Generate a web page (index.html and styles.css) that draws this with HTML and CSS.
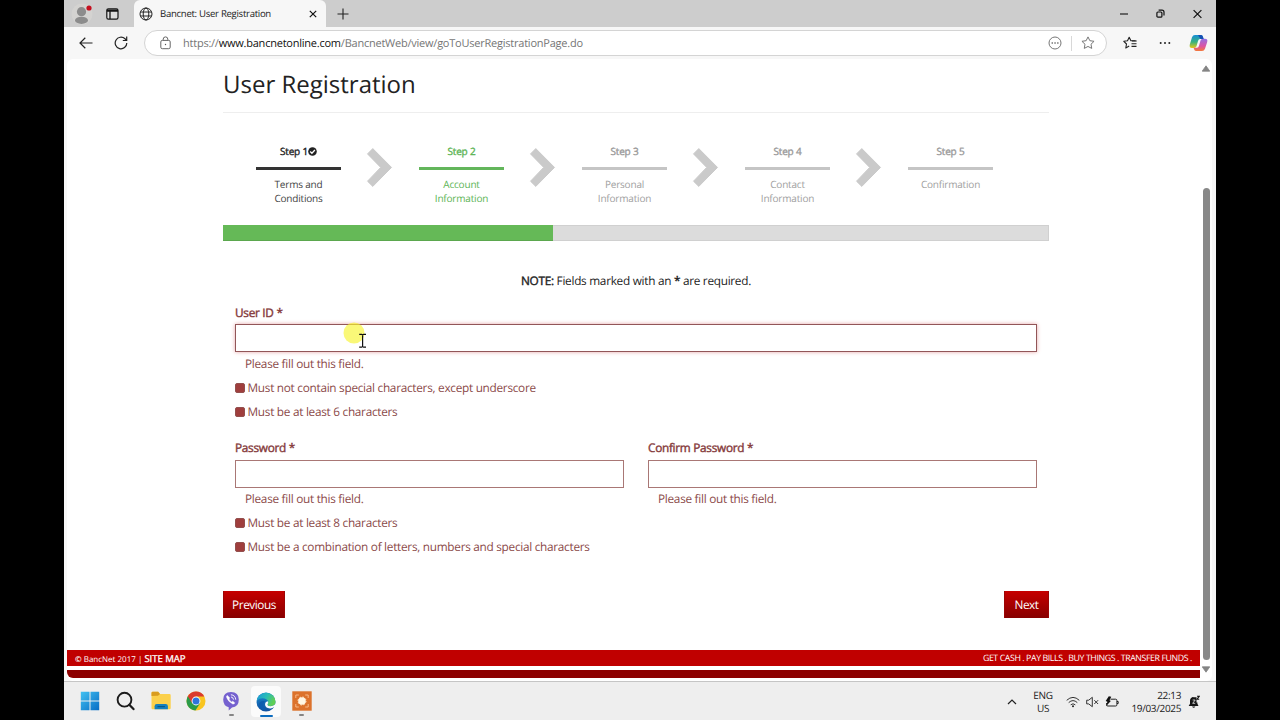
FILE: index.html
```html
<!DOCTYPE html>
<html lang="en">
<head>
<meta charset="utf-8">
<title>Bancnet: User Registration</title>
<link rel="stylesheet" href="styles.css">
</head>
<body>
<div class="screen">
  <header class="tabbar">
    <svg class="profile" width="24" height="24" viewBox="0 0 24 24"><circle cx="12" cy="12" r="10.5" fill="#d4d3d1"/><circle cx="11.5" cy="9.7" r="4.6" fill="#8c8c8c"/><ellipse cx="11.5" cy="18.3" rx="6.5" ry="3.6" fill="#8c8c8c"/><circle cx="19" cy="6" r="2.6" fill="#c50f1f"/></svg>
    <svg class="workspaces" width="13" height="12" viewBox="0 0 13 12"><rect x=".8" y=".8" width="11.2" height="10.4" rx="1.6" fill="#ddd" stroke="#151515" stroke-width="1.2"/><path d="M.8 2.2h11.2M1 3.2h11M4 3v8" stroke="#151515" stroke-width="1.3"/></svg>
    <div class="tab">
      <svg width="14" height="14" viewBox="0 0 14 14" fill="none" stroke="#222" stroke-width="1"><circle cx="7" cy="7" r="6"/><ellipse cx="7" cy="7" rx="2.8" ry="6"/><path d="M1.5 5h11M1.5 9h11"/></svg>
      <span class="tab-title">Bancnet: User Registration</span>
      <svg class="tab-close" width="8" height="8" viewBox="0 0 8 8" stroke="#111" stroke-width="1.2"><path d="M.8.8l6.4 6.4M7.2.8L.8 7.2"/></svg>
    </div>
    <svg class="newtab" width="12" height="12" viewBox="0 0 12 12" stroke="#222" stroke-width="1.1"><path d="M6 .5v11M.5 6h11"/></svg>
    <div class="winctl">
      <svg width="8" height="10" viewBox="0 0 8 10" stroke="#111" stroke-width="1.1"><path d="M0 5h8"/></svg>
      <svg width="9" height="10" viewBox="0 0 9 10" fill="none" stroke="#111" stroke-width="1.2"><rect x=".9" y="3" width="5" height="5.2" rx="1"/><path d="M2.6 1.2h3.4a2 2 0 0 1 2 2v3.2"/></svg>
      <svg width="9" height="10" viewBox="0 0 9 10" stroke="#111" stroke-width="1.2"><path d="M.6 1.1l7.8 7.8M8.4 1.1L.6 8.9"/></svg>
    </div>
  </header>
  <nav class="toolbar">
    <svg class="back" width="14" height="12" viewBox="0 0 14 12" fill="none" stroke="#222" stroke-width="1.2"><path d="M13.5 6H1M6.3.8L1 6l5.3 5.2"/></svg>
    <svg class="reload" width="14" height="14" viewBox="0 0 14 14" fill="none" stroke="#222" stroke-width="1.2"><path d="M12.8 7A5.8 5.8 0 1 1 11 2.8l1.5 1.5M12.7.6v3.9H8.8"/></svg>
    <div class="address">
      <svg width="11" height="14" viewBox="0 0 11 14" fill="none" stroke="#666" stroke-width="1"><rect x=".8" y="4.4" width="9.4" height="8.3" rx="1.5"/><path d="M3.2 4.4V3.2a2.3 2.3 0 0 1 4.6 0v1.2"/><circle cx="5.5" cy="8.5" r=".7" fill="#555" stroke="none"/></svg>
      <span class="url">https://<b>www.bancnetonline.com</b>/BancnetWeb/view/goToUserRegistrationPage.do</span>
      <svg class="more" width="14" height="14" viewBox="0 0 14 14"><circle cx="7" cy="7" r="6" fill="none" stroke="#777"/><path d="M3.6 7h1.3M6.4 7h1.3M9.2 7h1.3" stroke="#666" stroke-width="1.3"/></svg>
      <i class="sep"></i>
      <svg class="star" width="14" height="14" viewBox="0 0 14 14"><path d="M7 .9l1.850 3.800 4.200.6-3.050 2.950.72 4.150L7 10.450 3.280 12.400 4 8.250.95 5.300l4.200-.6z" fill="none" stroke="#777" stroke-linejoin="round"/></svg>
    </div>
    <svg class="favs" width="14" height="14" viewBox="0 0 14 14" fill="none" stroke="#222" stroke-width="1.1" stroke-linejoin="round"><path d="M12.6 4.8H7.9L6.2 1.2 4.5 4.8.8 5.300l2.700 2.700-.7 4 3.400-1.900"/><path d="M9 5h4.700M8.500 7.700h5M8.500 10.400h5"/></svg>
    <svg class="dots" width="12" height="4" viewBox="0 0 12 4" fill="#222"><circle cx="1.7" cy="2" r="1"/><circle cx="6" cy="2" r="1"/><circle cx="10.3" cy="2" r="1"/></svg>
    <svg class="copilot" width="19" height="18" viewBox="0 0 19 18">
      <defs><linearGradient id="ca" x1="0" y1="0" x2="0" y2="1"><stop offset="0" stop-color="#168ed8"/><stop offset=".55" stop-color="#3bb27c"/><stop offset="1" stop-color="#e9c716"/></linearGradient><linearGradient id="cb" x1="0" y1="0" x2="0" y2="1"><stop offset="0" stop-color="#9470e4"/><stop offset=".6" stop-color="#dd53a4"/><stop offset="1" stop-color="#f4793a"/></linearGradient></defs>
      <path d="M6 1h6q1.500 0 2 2l.6 2H11q-1.500 0-2 2l-1.500 5.200q-.6 1.800-2.500 1.800H3Q0 14 .8 10.500L3 3.200Q3.800 1 6 1z" fill="url(#ca)"/>
      <path d="M13 17H7q-1.500 0-2-2l-.4-1.200H8q1.500 0 2-2L11.500 6.600Q12 4.800 14 4.800h2Q19 4.800 18.200 8L16 14.800Q15.200 17 13 17z" fill="url(#cb)"/>
      <path d="M9 1h3q1.500 0 2 2l.6 1.900H11.500z" fill="#174fb4"/>
    </svg>
  </nav>
  <div class="viewport">
    <div class="page">
      <main class="content">
        <h1>User Registration</h1>
        <ol class="steps">
          <li class="step done"><b>Step 1<svg width="9" height="9" viewBox="0 0 9 9"><circle cx="4.5" cy="4.5" r="4.3" fill="#222"/><path d="M2.200 4.500l1.700 1.700 3-3.200" fill="none" stroke="#fff" stroke-width="1.3"/></svg></b><span>Terms and<br>Conditions</span></li>
          <li class="arrow"><svg width="27" height="41" viewBox="0 0 27 41"><path d="M1.500 6.900L6.800 1.600 25.500 20.400 6.800 39.400 1.500 34.200 14.700 20.400z" fill="#cacaca" stroke="#cacaca" stroke-linejoin="round"/></svg></li>
          <li class="step current"><b>Step 2</b><span>Account<br>Information</span></li>
          <li class="arrow"><svg width="27" height="41" viewBox="0 0 27 41"><path d="M1.500 6.900L6.800 1.600 25.500 20.400 6.800 39.400 1.500 34.200 14.700 20.400z" fill="#cacaca" stroke="#cacaca" stroke-linejoin="round"/></svg></li>
          <li class="step"><b>Step 3</b><span>Personal<br>Information</span></li>
          <li class="arrow"><svg width="27" height="41" viewBox="0 0 27 41"><path d="M1.500 6.900L6.800 1.600 25.500 20.400 6.800 39.400 1.500 34.200 14.700 20.400z" fill="#cacaca" stroke="#cacaca" stroke-linejoin="round"/></svg></li>
          <li class="step"><b>Step 4</b><span>Contact<br>Information</span></li>
          <li class="arrow"><svg width="27" height="41" viewBox="0 0 27 41"><path d="M1.500 6.900L6.800 1.600 25.500 20.400 6.800 39.400 1.500 34.200 14.700 20.400z" fill="#cacaca" stroke="#cacaca" stroke-linejoin="round"/></svg></li>
          <li class="step"><b>Step 5</b><span>Confirmation</span></li>
        </ol>
        <div class="progress"><div class="bar" style="width:40%"></div></div>
        <p class="note"><b>NOTE:</b> Fields marked with an <b>*</b> are required.</p>
        <form class="form">
          <div class="field user">
            <label>User ID *</label>
            <div class="input focused"><div class="pointer"><svg width="24" height="26" viewBox="0 0 24 26"><circle cx="11" cy="11" r="10.5" fill="#f7f430" fill-opacity=".65"/><path d="M16.200 12.300h2.400l1 .7 1-.7h2.400M19.600 13v11.500M16.200 25.200h2.400l1-.7 1 .7h2.400" fill="none" stroke="#111" stroke-width="1.2"/></svg></div></div>
            <p class="help">Please fill out this field.</p>
            <p class="rule">Must not contain special characters, except underscore</p>
            <p class="rule">Must be at least 6 characters</p>
          </div>
          <div class="pair">
            <div class="field">
              <label>Password *</label>
              <div class="input"></div>
              <p class="help">Please fill out this field.</p>
              <p class="rule">Must be at least 8 characters</p>
              <p class="rule">Must be a combination of letters, numbers and special characters</p>
            </div>
            <div class="field">
              <label>Confirm Password *</label>
              <div class="input"></div>
              <p class="help">Please fill out this field.</p>
            </div>
          </div>
        </form>
        <div class="actions"><span class="btn prev">Previous</span><span class="btn next">Next</span></div>
      </main>
      <footer class="footer"><span class="copy"><i>©</i> BancNet 2017 | <b>SITE MAP</b></span><span class="slogan">GET CASH . PAY BILLS . BUY THINGS . TRANSFER FUNDS .</span></footer>
      <div class="footer-base"></div>
    </div>
    <div class="scrollbar">
      <svg width="8" height="7" viewBox="0 0 8 7"><path d="M4 .8L7.800 6.200H.2z" fill="#858585" stroke="#858585" stroke-width=".8" stroke-linejoin="round"/></svg>
      <div class="thumb"></div>
      <svg width="8" height="7" viewBox="0 0 8 7"><path d="M4 6.200L7.800.8H.2z" fill="#858585" stroke="#858585" stroke-width=".8" stroke-linejoin="round"/></svg>
    </div>
  </div>
  <div class="taskbar">
    <div class="apps">
      <div class="app"><svg width="20" height="20" viewBox="0 0 20 20"><defs><linearGradient id="wn" gradientUnits="userSpaceOnUse" x1="0" y1="0" x2="20" y2="20"><stop offset="0" stop-color="#43c5f3"/><stop offset="1" stop-color="#0669c3"/></linearGradient></defs><path d="M.8.8h8.700v8.700H.8zM10.500.8h8.700v8.700h-8.700zM.8 10.500h8.700v8.700H.8zM10.500 10.500h8.700v8.700h-8.700z" fill="url(#wn)"/></svg></div>
      <div class="app"><svg width="20" height="20" viewBox="0 0 20 20" fill="none" stroke="#1b1b1b"><circle cx="9.5" cy="8.7" r="6.9" stroke-width="1.9"/><path d="M14.300 13.700l4.200 4.400" stroke-width="2.2" stroke-linecap="round"/></svg></div>
      <div class="app folder"><svg width="20" height="20" viewBox="0 0 20 20"><path d="M.5 2q0-1.200 1.200-1.200h5.500L9 3h9.500q1.200 0 1.200 1.200V17q0 1.200-1.200 1.200h-17Q.5 18.200.5 17z" fill="#fbd04b"/><path d="M.5 5V2Q.5.800 1.700.800h5.500L9 2.900 7 4.800z" fill="#d99c1f"/><path d="M3.600 18.200v-3q0-2.200 2.200-2.200h8.900q2.200 0 2.200 2.200v3z" fill="#157fbd"/><path d="M6.500 15.600h7.400" stroke="#075985" stroke-width="1.2"/></svg></div>
      <div class="app"><svg width="20" height="20" viewBox="0 0 20 20"><circle cx="10" cy="10" r="9.5" fill="#f9c51f"/><path d="M10 10L1.800 5.200A9.500 9.500 0 0 0 9.400 19.500l4.700-7.200z" fill="#2a9b49"/><path d="M1.800 5.300A9.500 9.500 0 0 1 18.300 5.500H10L6 12z" fill="#da3a2f"/><circle cx="10" cy="10" r="4.4" fill="#fff"/><circle cx="10" cy="10" r="3.5" fill="#2e74dc"/></svg></div>
      <div class="app running"><svg width="18" height="20" viewBox="0 0 18 20"><path d="M9 1Q16.800 1 16.800 8.600T10 16.400l-3.300 3v-3.200Q1.200 15 1.200 8.600 1.200 1 9 1z" fill="#7561cf"/><path d="M5.300 4.400Q4 5 4.700 6.600q1.500 4.200 6 6.300 1.400.4 2.100-1l-2-1.700-1.200.8q-1.900-1-2.700-3l.9-1z" fill="#fff" stroke="#fff" stroke-width=".5" stroke-linejoin="round"/><path d="M9.300 3.800q4.100.4 4.400 4.500M9.400 6q1.900.3 2.100 2.200" fill="none" stroke="#fff" stroke-width=".9" stroke-linecap="round"/></svg></div>
      <div class="app active"><svg width="20" height="20" viewBox="0 0 20 20"><defs><linearGradient id="ea" x1="0" y1="0" x2="1" y2=".4"><stop offset="0" stop-color="#1b94da"/><stop offset=".55" stop-color="#29bdb6"/><stop offset="1" stop-color="#60cf55"/></linearGradient><linearGradient id="eb" x1="0" y1="0" x2="0" y2="1"><stop offset="0" stop-color="#178ad1"/><stop offset="1" stop-color="#11509f"/></linearGradient></defs><circle cx="10" cy="10" r="9.5" fill="url(#eb)"/><path d="M.6 9A9.500 9.500 0 0 1 19.500 9.500Q19.600 14 14.700 14q-3.700 0-3.200-1.800 1-1 .7-2.600C11.500 6.700 5 4.200.6 9z" fill="url(#ea)"/><path d="M9 9q-4.500 5 1.500 9.500-7.400-.6-7.700-6Q3 8.500 9 9z" fill="#0d5cae"/><path d="M12 9.200q.7 1.800-.5 3-.3 1.900 3 2 2.600 0 4.800-1.900L20 15l-1.800.1q-2 1.600-4.200 1.400Q9 16 9 12q.3-2.600 3-2.800z" fill="#f9fbfd"/></svg></div>
      <div class="app running"><svg width="20" height="20" viewBox="0 0 20 20"><rect x=".3" y=".3" width="19.400" height="19.400" fill="#dc722c"/><path d="M3.800 7V4h3M13.200 4h3v3M16.200 13v3h-3M6.800 16h-3v-3" fill="none" stroke="#ffc99c" stroke-width=".8"/><circle cx="10" cy="10" r="3.800" fill="#fff6e4"/><circle cx="10" cy="10" r="4" fill="none" stroke="#fff0d8" stroke-width="1" stroke-dasharray="1.570 1.570"/></svg></div>
    </div>
    <div class="tray">
      <svg class="up" width="10" height="6" viewBox="0 0 10 6" fill="none" stroke="#222" stroke-width="1.2"><path d="M1 5l4-4 4 4"/></svg>
      <div class="lang">ENG<br>US</div>
      <svg class="wifi" width="14" height="12" viewBox="0 0 14 12" fill="none" stroke="#333"><path d="M.7 4.300q6.300-5.800 12.600 0M2.700 6.600q4.300-4 8.600 0M4.700 8.800q2.300-2 4.600 0"/><circle cx="7" cy="10.300" r="1" fill="#222" stroke="none"/></svg>
      <svg class="mute" width="13" height="12" viewBox="0 0 13 12" fill="none" stroke="#333"><path d="M.7 4.200h2L6.300 1.300v9.400L2.700 7.900h-2zM8.300 4.200l3.800 3.800M12.100 4.200L8.300 8" stroke-linejoin="round"/></svg>
      <svg class="battery" width="14" height="12" viewBox="0 0 14 12"><path d="M5.500 3.200h5.200q1.200 0 1.200 1.200v4.400q0 1.200-1.200 1.200H2.800q-1.200 0-1.200-1.200V7M12 5.500h1.200v2H12" fill="none" stroke="#222"/><path d="M3.800.3L.7 5l1.700.7L1 10.200 5.800 5 4.500 4.300 6.300.7z" fill="#111"/></svg>
      <div class="clock">22:13<br>19/03/2025</div>
      <svg class="bell" width="12" height="14" viewBox="0 0 12 14"><path d="M5.300 2Q2 2.600 2 6v2.800L.7 11h9.800L9.400 8.800V7.500H6zM4 11.500h3.400q-1.700 2.500-3.400 0z" fill="#151515"/><path d="M2.500 5.500q.3-3 3-3.300h3v6.300h-6z" fill="#151515"/><path d="M4.700 5h2.500L4.700 8.300h2.500" fill="none" stroke="#eee" stroke-width=".8"/><path d="M9 1.300h2.200L9 4.200h2.200" fill="none" stroke="#151515" stroke-width="1.1"/></svg>
    </div>
  </div>
</div>
</body>
</html>
```
FILE: styles.css
```css
*, ::before, ::after { box-sizing: border-box; }
body { margin: 0; background: #000; font-family: "Open Sans", "Noto Sans", sans-serif; text-rendering: geometricPrecision; }
svg { display: block; flex: none; }
h1, p, ol { margin: 0; padding: 0; }
.screen { width: 1152px; height: 720px; margin: 0 auto; background: #f7f7f7; display: flex; flex-direction: column; overflow: hidden; white-space: nowrap; }

.tabbar { height: 27px; background: #cdcdcd; display: flex; align-items: center; padding-left: 6px; flex: none; }
.workspaces { margin-left: 12px; }
.tab { width: 192px; height: 27px; margin-left: 15px; padding: 0 9px 0 5px; background: #f7f7f7; border-radius: 6px 6px 0 0; display: flex; align-items: center; }
.tab-title { font-size: 9.6px; line-height: 14px; letter-spacing: -.3px; color: #1c1c1c; margin-left: 7px; }
.tab-close { margin-left: auto; }
.newtab { margin-left: 11px; }
.winctl { margin-left: auto; display: flex; gap: 28px; padding-right: 14px; }

.toolbar { height: 32px; flex: none; display: flex; align-items: center; padding-left: 15px; }
.reload { margin-left: 21px; }
.address { width: 963px; height: 26px; margin-left: 16px; padding: 0 11px 0 15px; background: #fff; border: 1px solid #d4d4d4; border-radius: 13px; display: flex; align-items: center; }
.url { font-size: 11px; line-height: 16px; letter-spacing: -.23px; color: #767676; margin-left: 12px; padding-top: 2px; }
.url b { font-weight: 400; color: #111; }
.more { margin-left: auto; }
.sep { width: 1px; height: 15px; background: #d8d8d8; margin: 0 9px; }
.favs { margin-left: 16px; }
.dots { margin-left: 22px; }
.copilot { margin-left: 18px; }

.viewport { height: 622px; flex: none; margin: 0 4px 0 3px; background: #fff; border-radius: 6px; display: flex; overflow: hidden; }
.page { width: 1133px; flex: none; }
.content { width: 826px; height: 591px; margin-left: 156px; color: #222; font-size: 11.8px; letter-spacing: -.28px; }
h1 { height: 54px; border-bottom: 1px solid #eee; font-size: 24px; line-height: 52px; font-weight: 400; letter-spacing: 0; color: #222; }
.steps { list-style: none; display: flex; height: 112px; padding: 31px 0 0 33px; }
.step { width: 85px; text-align: center; color: #a0a0a0; font-size: 10px; line-height: 13.5px; letter-spacing: -.19px; }
.step b { display: flex; justify-content: center; align-items: center; height: 26px; padding-bottom: 8px; border-bottom: 3px solid #c5c5c5; font-weight: 400; -webkit-text-stroke: .35px; color: #999; }
.step span { display: block; padding-top: 8px; }
.done { color: #444; }
.done b { color: #222; border-color: #333; }
.current, .current b { color: #5cb454; }
.current b { border-color: #63b65b; }
.arrow { width: 78px; padding: 3px 0 0 25px; }
.progress { height: 16px; background: #dcdcdc; border: 1px solid #d0d0d0; border-width: 1px 1px 1px 0; }
.bar { height: 16px; margin-top: -1px; background: #65b957; border-bottom: 1px solid #5ba74e; }
.note { text-align: center; margin-top: 32px; line-height: 17px; height: 16px; color: #222; }
.note b { font-weight: 400; -webkit-text-stroke: .4px; }
.form { padding: 16px 12px 0; color: #8b4a49; }
.field label { display: block; height: 19px; line-height: 17px; -webkit-text-stroke: .4px; color: #853a3b; }
.input { height: 28px; border: 1px solid #a97775; background: #fff; position: relative; }
.focused { border-color: #925658; box-shadow: 0 0 4px #e6a5a6; }
.pointer { position: absolute; left: 107px; top: -3px; }
.help { line-height: 17px; height: 16px; margin: 4px 0 8px 10px; }
.rule { display: flex; align-items: center; height: 16px; line-height: 16px; margin-bottom: 8px; }
.rule::before { content: ""; flex: none; width: 10px; height: 10px; margin-right: 2.5px; border-radius: 2px; background: #9f3e3d; border: 1px solid #93504e; }
.user { height: 135px; }
.pair { display: grid; grid-template-columns: 389px 389px; gap: 24px; }
.pair .input { margin-top: 1px; }
.pair .help { margin-top: 3px; }
.pair .field { height: 151px; }
.actions { display: flex; justify-content: space-between; }
.btn { height: 27px; line-height: 28px; text-align: center; color: #fff; background: linear-gradient(#c60000, #870000); border: 1px solid #9b0505; border-width: 0 1px; letter-spacing: -.45px; }
.prev { width: 62px; }
.next { width: 45px; }
.footer { height: 16px; background: #c00000; color: #fff; display: flex; justify-content: space-between; font-size: 8px; line-height: 17px; letter-spacing: 0; padding: 0 8px; }
.footer b { font-weight: 400; -webkit-text-stroke: .3px; font-size: 9.6px; letter-spacing: -.05px; }
.footer i { font-style: normal; font-weight: 700; }
.slogan { font-size: 8.8px; line-height: 16px; letter-spacing: -.41px; }
.footer-base { height: 8px; margin-top: 4px; background: #8d0000; border-radius: 0 0 0 6px; }
.scrollbar { flex: 1; display: flex; flex-direction: column; align-items: center; padding: 6px 0 8px; }
.thumb { width: 7px; height: 472px; margin: auto 0 6px; border-radius: 4px; background: #888; }

.taskbar { flex: 1; background: #eee; border-top: 1px solid #c5c5c5; display: flex; justify-content: space-between; }
.apps { display: flex; padding: 1px 0 0 8px; gap: 5.4px; }
.app { width: 30px; height: 38px; padding: 0 0 2px 5px; position: relative; display: flex; align-items: center; justify-content: center; }
.folder { padding-left: 7px; }
.active { background: #fbfbfb; height: 31px; margin: 3px -2.5px 0 2.5px; border-radius: 4px; padding: 0; }
.running::after, .active::after { content: ""; position: absolute; left: 15px; bottom: 5px; width: 5px; height: 2px; border-radius: 1px; background: #858585; }
.active::after { left: 9px; bottom: 0; width: 13px; background: #0b6bbf; }
.tray { display: flex; align-items: center; padding-right: 16px; color: #222; font-size: 10px; line-height: 12.5px; letter-spacing: -.35px; }
.lang { width: 30px; text-align: center; margin-left: 11px; }
.wifi { margin-left: 8px; }
.mute { margin-left: 6px; }
.battery { margin-left: 6px; }
.clock { width: 58px; text-align: right; margin-left: 4px; }
.bell { margin-left: 7px; }
```
